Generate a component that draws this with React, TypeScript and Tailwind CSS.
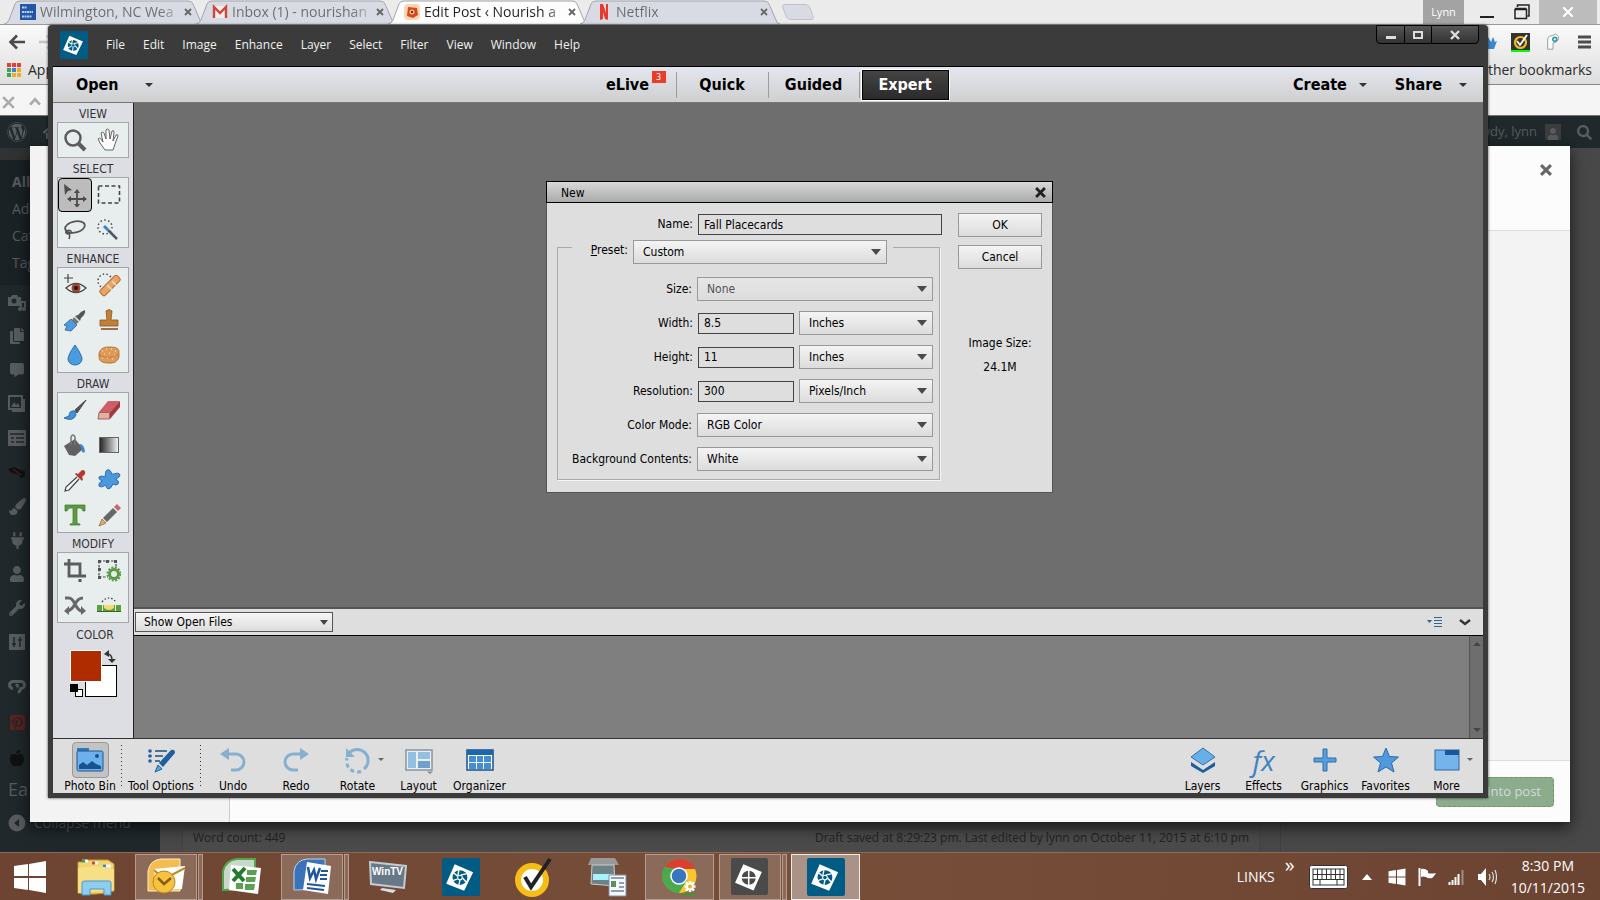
import React from 'react';
import { FaWordpress, FaHome, FaCopy, FaCommentAlt, FaPlug, FaUser, FaWrench, FaPinterestSquare, FaPaintBrush, FaSearch, FaAppleAlt } from 'react-icons/fa';

type IconProps = { children: React.ReactNode; size?: number; box?: number };

const Icon = ({ children, size = 24, box = 24 }: IconProps) => (
    <svg width={size} height={size} viewBox={`0 0 ${box} ${box}`} fill="none" aria-hidden="true" className="block shrink-0">
        {children}
    </svg>
);

const Caret = ({ color = '#333' }: { color?: string }) => (
    <svg width="8" height="4" viewBox="0 0 8 4" aria-hidden="true" className="shrink-0">
        <path d="M0 0h8L4 4z" fill={color} />
    </svg>
);

const Aperture = ({ size = 28, bg = '#005b85' }: { size?: number; bg?: string }) => (
    <Icon size={size} box={36}>
        <rect width="36" height="36" rx="2" fill={bg} />
        <path d="M12 6l17.500 7.500L21 31 4 24.500z" fill="#fff" />
        <circle cx="17" cy="18.500" r="7" fill={bg} />
        <circle cx="17" cy="18.500" r="2.200" stroke="#fff" strokeWidth="1" />
        <path d="M15 16.500l1-5M18 16l5-1M19.500 19l3.500 4M17 21l-1 4.500M14.500 20l-4.500 1.500M14.500 17l-3.500-3" stroke="#fff" strokeWidth="1.300" />
    </Icon>
);

/* ---------- browser behind ---------- */

type Tab = { title: string; active?: boolean; icon: React.ReactNode };

const TABS: Tab[] = [
    {
        title: 'Wilmington, NC Wea',
        icon: (
            <Icon size={16} box={16}>
                <rect width="16" height="16" fill="#2456a6" />
                <path d="M2 3.500h5M2 8h11M2 12.500h10" stroke="#b9cdec" strokeWidth="1.800" strokeDasharray="2 .5" />
            </Icon>
        ),
    },
    {
        title: 'Inbox (1) - nourishan',
        icon: (
            <Icon size={16} box={16}>
                <rect x="1" y="2" width="14" height="12" fill="#eee" />
                <path d="M2 14V3l6 6 6-6v11" stroke="#d0463b" strokeWidth="2.400" />
            </Icon>
        ),
    },
    {
        title: 'Edit Post ‹ Nourish a',
        active: true,
        icon: (
            <Icon size={16} box={16}>
                <rect width="16" height="16" rx="4" fill="#f6d9b4" />
                <path d="M4 3l9 1 1 7-5 3-6-2z" fill="#d9481c" />
                <circle cx="8" cy="8" r="2.500" fill="#f3c49c" />
                <circle cx="8" cy="8" r="1.200" fill="#8d1f12" />
            </Icon>
        ),
    },
    {
        title: 'Netflix',
        icon: (
            <Icon size={16} box={16}>
                <path d="M4 0h3l3 9V0h2v16l-3-1-2-7v7l-3 1z" fill="#e8392c" />
            </Icon>
        ),
    },
];

const BrowserTab = ({ tab }: { tab: Tab }) => (
    <button type="button" className="relative -mr-2 flex h-6 w-[200px] items-center gap-1 pl-4 pr-3">
        <svg className="absolute inset-0 h-full w-full" viewBox="0 0 200 24" preserveAspectRatio="none" aria-hidden="true">
            <path
                d="M0 24 Q3 24 5 20 L11 4 Q12 1 16 1 L184 1 Q188 1 189 4 L196 20 Q197 24 200 24"
                fill={tab.active ? '#fdfdfd' : '#d8dbe3'}
                stroke="#a3a5ab"
            />
        </svg>
        <span className="relative">{tab.icon}</span>
        <span
            className={
                tab.active
                    ? 'relative flex-1 whitespace-nowrap bg-linear-to-r from-[#222] from-85% to-[#ccc] bg-clip-text text-left text-sm text-transparent'
                    : 'relative flex-1 whitespace-nowrap bg-linear-to-r from-[#6b6b6b] from-85% to-[#c4c7ce] bg-clip-text text-left text-sm text-transparent'
            }
        >
            {tab.title}
        </span>
        <svg width="8" height="8" viewBox="0 0 8 8" className="relative shrink-0" aria-hidden="true">
            <path d="M1 1l6 6M7 1L1 7" stroke="#666" strokeWidth="1.800" />
        </svg>
    </button>
);

const SIDEBAR_ICONS = [
    { height: 'h-[34px]', icon: <Icon size={20} box={20}><path d="M1 5h3l1-2h5l1 2h3v9H1z" fill="currentColor" /><circle cx="7" cy="9" r="2.500" fill="#20282b" /><path d="M13 9h6v8a2 2 0 11-2-2v-4h-2v6a2 2 0 11-2-2z" fill="currentColor" /></Icon> },
    { height: 'h-[34px]', icon: <FaCopy size={16} /> },
    { height: 'h-[34px]', icon: <FaCommentAlt size={14} /> },
    { height: 'h-[34px]', icon: <Icon size={18} box={18}><path d="M1 1h13v13H1zM16 4v12H4" stroke="currentColor" strokeWidth="2" /><path d="M3 12l3-5 2 3 2-2 2 4z" fill="currentColor" /></Icon> },
    { height: 'h-[34px]', icon: <Icon size={18} box={18}><path d="M0 1h18v16H0z" fill="currentColor" /><path d="M2 5h14M3 9h3M8 9h8M3 13h3M8 13h8" stroke="#20282b" strokeWidth="1.500" /></Icon> },
    { height: 'h-[34px]', icon: <Icon size={20} box={20}><path d="M1 7l6-2 7 3 4 1v6l-4 1-3-4-6-1z" fill="#111" /><path d="M6 7l8 6" stroke="#5c2620" /></Icon> },
    { height: 'h-[34px]', icon: <FaPaintBrush size={17} /> },
    { height: 'h-[34px]', icon: <FaPlug size={17} /> },
    { height: 'h-[34px]', icon: <FaUser size={16} /> },
    { height: 'h-[34px]', icon: <FaWrench size={16} /> },
    { height: 'h-[34px]', icon: <Icon size={16} box={16}><rect width="16" height="16" fill="currentColor" /><path d="M5 3v10M11 3v10M3 10h4M9 6h4" stroke="#20282b" strokeWidth="1.500" /></Icon> },
    { height: 'h-[54px]', icon: <Icon size={20} box={20}><path d="M6 12.500a3.500 3.500 0 010-7c4 0 3 0 4 0s0 0 4 0a3.500 3.500 0 010 7q-1 3-3 4" stroke="currentColor" strokeWidth="3" /><path d="M8 9q2-3 4 0l-1 4z" fill="currentColor" /></Icon> },
    { height: 'h-[18px]', icon: <span className="text-[#5e211d]"><FaPinterestSquare size={17} /></span> },
    { height: 'h-[54px]', icon: <span className="text-[#111]"><FaAppleAlt size={16} /></span> },
];

const Browser = () => (
    <div className="flex min-h-0 flex-1 flex-col font-['Open_Sans',sans-serif]">
        <div className="flex h-[25px] shrink-0 border-b border-[#999] bg-[#ebebeb]">
            <div className="flex pl-1">
                {TABS.map((tab) => (
                    <BrowserTab key={tab.title} tab={tab} />
                ))}
                <button type="button" aria-label="New tab" className="ml-3 mt-1 h-4 w-[28px] skew-x-[20deg] rounded border border-[#bfc1c6] bg-[#d8dbe3]" />
            </div>
            <div className="ml-auto flex items-center pr-[3px]">
                <span className="flex h-6 w-[41px] items-center justify-center bg-[#a3a3a3] text-[11px] text-white">Lynn</span>
                <button type="button" aria-label="Minimize" className="flex h-6 w-[45px] items-end justify-center pb-1.5">
                    <span className="h-0.5 w-3.5 bg-[#222]" />
                </button>
                <button type="button" aria-label="Restore" className="mr-1 flex h-6 w-[26px] items-center justify-center">
                    <Icon size={16} box={16}>
                        <path d="M1 5.500h11.500v9H1zM1 4.500h11.500M3.500 3V1H15v11h-1.500" stroke="#222" strokeWidth="1.500" />
                    </Icon>
                </button>
                <button type="button" aria-label="Close" className="flex h-6 w-[58px] items-center justify-center bg-[#bcbcbc]">
                    <Icon size={10} box={10}>
                        <path d="M0 0l10 10M10 0L0 10" stroke="#fff" strokeWidth="2" />
                    </Icon>
                </button>
            </div>
        </div>
        <div className="flex h-[60px] shrink-0 flex-col border-b border-[#888] bg-linear-to-b from-[#fafafa] to-[#dedede]">
            <div className="flex h-[34px] items-center pl-2 pr-2">
                <Icon size={18} box={18}>
                    <path d="M17 9H3M9 2.500L2.500 9 9 15.500" stroke="#4a4a4a" strokeWidth="2.600" />
                </Icon>
                <span className="ml-3">
                    <Icon size={18} box={18}>
                        <path d="M1 9h14M9 2.500L15.500 9 9 15.500" stroke="#c4c4c4" strokeWidth="2.600" />
                    </Icon>
                </span>
                <div className="ml-auto flex items-center gap-3.5">
                    <Icon size={18} box={18}>
                        <path d="M9 4l3 5 2-5 2 5 2-1-3 8H8z" fill="#3f86cf" />
                    </Icon>
                    <Icon size={19} box={19}>
                        <rect width="19" height="19" fill="#333" />
                        <circle cx="9.500" cy="9.500" r="5.500" stroke="#f5b921" strokeWidth="2.200" />
                        <path d="M6 8l3 4 7-10" stroke="#fff" strokeWidth="1.800" />
                        <path d="M0 18h19" stroke="#0f0" strokeWidth="2" />
                    </Icon>
                    <Icon size={18} box={20}>
                        <path d="M4 18V8q0-5 5-5l4-2 3 3q1 6-6 7v7z" fill="#f8f8f8" stroke="#999" />
                        <circle cx="12" cy="7" r="3" fill="#2b9aa5" />
                        <circle cx="12" cy="7" r="1.200" fill="#fff" />
                    </Icon>
                    <Icon size={16} box={16}>
                        <path d="M2 3h13M2 8h13M2 13h13" stroke="#4d4d4d" strokeWidth="3" />
                    </Icon>
                </div>
            </div>
            <div className="flex h-[22px] items-center justify-between pl-[7px] pr-2 text-sm text-[#2b2b2b]">
                <span className="flex items-center gap-[7px]">
                    <Icon size={14} box={14}>
                        <path d="M0 2h4M5 2h4M10 2h4" stroke="#e53f34" strokeWidth="4" />
                        <path d="M0 7h4M0 12h4" stroke="#3fa354" strokeWidth="4" />
                        <path d="M5 7h4" stroke="#3b7de0" strokeWidth="4" />
                        <path d="M10 7h4M5 12h4M10 12h4" stroke="#f0ac1c" strokeWidth="4" />
                    </Icon>
                    Apps
                </span>
                <span>Other bookmarks</span>
            </div>
        </div>
        <div className="flex h-[31px] shrink-0 items-center gap-3.5 border-b border-[#777] bg-[#f5f5f5] pl-0.5 pt-1">
            <Icon size={13} box={11}>
                <path d="M1 1l9 9M10 1l-9 9" stroke="#ababab" strokeWidth="2.200" />
            </Icon>
            <Icon size={12} box={11}>
                <path d="M1 8l4.500-5L10 8" stroke="#ababab" strokeWidth="2.400" />
            </Icon>
        </div>
        <WordPress />
    </div>
);

const WordPress = () => (
    <div className="relative flex min-h-0 flex-1 flex-col overflow-hidden bg-[#484848] text-[#585c5e]">
        <div className="flex h-8 shrink-0 items-center justify-between bg-[#20282b] pl-[7px] pr-2">
            <span className="flex items-center gap-4">
                <FaWordpress size={20} />
                <FaHome size={18} />
            </span>
            <span className="flex items-center gap-2 text-[13px]">
                Howdy, lynn
                <span className="flex size-4 items-end justify-center bg-[#3c3c3c]">
                    <FaUser size={12} />
                </span>
                <span className="ml-2">
                    <FaSearch size={15} />
                </span>
            </span>
        </div>
        <div className="flex min-h-0 flex-1">
            <nav className="w-40 shrink-0 bg-[#20282b]">
                <div className="h-3 bg-[#303233]" />
                <div className="flex h-[125px] flex-col bg-[#1b2225] pl-3 pt-2 text-sm leading-[27px]">
                    <a href="#all" className="font-bold">All</a>
                    <a href="#add">Add</a>
                    <a href="#categories">Cat</a>
                    <a href="#tags">Tag</a>
                </div>
                {SIDEBAR_ICONS.map((item, index) => (
                    <div key={index} className={`${item.height} flex w-[34px] items-center justify-center`}>
                        {item.icon}
                    </div>
                ))}
                <div className="-mt-2 h-6 pl-2 text-lg leading-6">Ea</div>
                <div className="mt-3 flex items-center gap-2 pl-2 text-sm">
                    <Icon size={18} box={18}>
                        <circle cx="9" cy="9" r="8.500" fill="currentColor" />
                        <path d="M11 5L6 9l5 4z" fill="#20282b" />
                    </Icon>
                    Collapse menu
                </div>
            </nav>
            <div className="flex flex-1 items-end pl-[22px]">
                <div className="flex h-[22px] flex-1 items-start justify-between border-x border-[#424242] bg-[#4b4b4b] px-2.5 text-xs text-[#222]">
                    <span>Word count: 449</span>
                    <span>Draft saved at 8:29:23 pm. Last edited by lynn on October 11, 2015 at 6:10 pm</span>
                </div>
                <div className="ml-5 h-[30px] w-[320px] border-l border-[#404040]" />
            </div>
        </div>
        <section className="absolute bottom-[30px] left-[30px] right-[30px] top-[30px] flex bg-[#fcfcfc] shadow-[0_5px_15px_rgba(0,0,0,0.7)]">
            <div className="w-[200px] border-r border-[#ccc] bg-[#f3f3f3]" />
            <div className="flex flex-1 flex-col">
                <div className="flex h-[84px] justify-end pr-[18px] pt-[18px]">
                    <button type="button" aria-label="Close media panel" className="size-3">
                        <Icon size={12} box={11}>
                            <path d="M1 1l9 9M10 1l-9 9" stroke="#666" strokeWidth="2.800" />
                        </Icon>
                    </button>
                </div>
                <div className="flex-1 border-y border-[#ddd] bg-[#f3f3f3]" />
                <div className="flex h-[61px] items-center justify-end pr-4">
                    <button type="button" className="h-[30px] w-[118px] rounded border border-dashed border-[#6a9a55] bg-[#8bac8d] pr-3 text-right text-[13px] text-[#d5dbd6]">
                        into post
                    </button>
                </div>
            </div>
        </section>
    </div>
);

/* ---------- tool panel ---------- */

const TOOL_GROUPS: { title: string; tools: { name: string; active?: boolean; icon: React.ReactNode }[] }[] = [
    {
        title: 'VIEW',
        tools: [
            { name: 'Zoom', icon: <Icon><circle cx="10" cy="10" r="7.500" stroke="#5c5c5c" strokeWidth="2.500" /><path d="M15.500 15.500l6.500 6.500" stroke="#5c5c5c" strokeWidth="4" /></Icon> },
            { name: 'Hand', icon: <Icon><path d="M8 22L3 15 1 11q1-2 3 0l2 3L4 5q1-2 3 0l2 6V2q1-2 3 0l1 9 2-8q2-1 2 1l-1 9 3-6q2-1 2 1l-3 8-2 6z" fill="#fcfcfc" stroke="#555" strokeWidth=".9" /></Icon> },
        ],
    },
    {
        title: 'SELECT',
        tools: [
            { name: 'Move', active: true, icon: <Icon><path d="M1 1l8 6-4 1-3 4z" fill="#4c4c4c" /><path d="M14 9v14M7 16h14" stroke="#4c4c4c" strokeWidth="1.800" /><path d="M14 6l3 4h-6zM14 25l3-4h-6zM4 16l4-3v6zM24 16l-4-3v6z" fill="#4c4c4c" /></Icon> },
            { name: 'Marquee', icon: <Icon><rect x="1.500" y="3" width="21" height="17" stroke="#444" strokeWidth="1.600" strokeDasharray="4 2.500" /></Icon> },
            { name: 'Lasso', icon: <Icon><ellipse cx="12" cy="9" rx="10" ry="5.500" transform="rotate(-12 12 9)" stroke="#555" strokeWidth="1.800" /><path d="M4 12q-3 3 1 4 4 0 3-3-3-2-4 1 4 2 2 7" stroke="#555" strokeWidth="1.500" /></Icon> },
            { name: 'Quick selection', icon: <Icon><circle cx="8" cy="9" r="7" stroke="#444" strokeWidth="1.500" strokeDasharray="1.500 2.500" /><path d="M7 8l4 4" stroke="#3484d0" strokeWidth="3" /><path d="M11 12l9 9" stroke="#4d5964" strokeWidth="2.500" /></Icon> },
        ],
    },
    {
        title: 'ENHANCE',
        tools: [
            { name: 'Red eye', icon: <Icon><path d="M5 1v9M1 5h9" stroke="#444" strokeWidth="1.200" /><path d="M3 15q10-9 20 0-10 9-20 0z" fill="#f3f3f3" stroke="#444" strokeWidth="1.300" /><circle cx="13" cy="15" r="4.500" fill="#9c4331" /><circle cx="13" cy="15" r="2" fill="#2c1512" /></Icon> },
            { name: 'Healing', icon: <Icon><circle cx="8" cy="8" r="7" stroke="#444" strokeWidth="1.400" strokeDasharray="1.500 2.300" /><rect x="1" y="9" width="24" height="7" rx="2" transform="rotate(-45 13 12.500)" fill="#e9a565" stroke="#b26f35" /><path d="M10 12l5 5M15 8l4 4" stroke="#f8dfbc" strokeWidth="1.500" /></Icon> },
            { name: 'Smart brush', icon: <Icon><path d="M22 2q-4 1-7 5l-3 1 5 5 1-3q5-4 4-8z" fill="#555" /><path d="M11 9l5 5-3 2-4-4z" fill="#777" /><path d="M8 11l6 6-6 6-6-1 2-4-3-1z" fill="#4f9add" stroke="#2866a2" strokeWidth=".8" /></Icon> },
            { name: 'Clone stamp', icon: <Icon><path d="M9 3q3-3 6 0l-1 9h7v6H3v-6h7z" fill="#c08038" stroke="#8d5520" strokeWidth=".8" /><path d="M4 21h17" stroke="#804416" strokeWidth="1.500" /></Icon> },
            { name: 'Blur', icon: <Icon><path d="M12 2q7 10 7 14a7 6 0 01-14 0q0-4 7-14z" fill="#4b9bdf" stroke="#2d6da9" /></Icon> },
            { name: 'Sponge', icon: <Icon><path d="M2 10q2-7 12-6 9 0 8 6v4q-2 7-11 6-9 0-9-6z" fill="#df9a57" stroke="#a8682e" strokeWidth=".8" /><path d="M5 8h1M9 6h1M14 6h1M18 8h1M7 11h1M12 10h1M17 12h1M5 15h1M10 15h1M15 16h1" stroke="#f7d6a8" strokeWidth="1.500" /><path d="M2 12q10 5 20-1" stroke="#a8682e" strokeWidth=".8" strokeDasharray="2 1" /></Icon> },
        ],
    },
    {
        title: 'DRAW',
        tools: [
            { name: 'Brush', icon: <Icon><path d="M23 2L12 12l2 3z" fill="#555" stroke="#444" /><path d="M12 13q-6-1-6 5l-5 2q9 4 12-3z" fill="#4391d8" stroke="#245f9b" strokeWidth=".8" /></Icon> },
            { name: 'Eraser', icon: <Icon><path d="M11 3h12L13 14H2z" fill="#cf5d68" /><path d="M23 3v6L13 21v-7z" fill="#a8363f" /><path d="M2 14.500h10.500V21H1z" fill="#e2b0a5" stroke="#8e4a45" strokeWidth=".8" /></Icon> },
            { name: 'Paint bucket', icon: <Icon><path d="M1 13l11-7 8 10-8 7-6-1z" fill="#616161" /><path d="M8 12V4q2-4 4 0v8" stroke="#777" strokeWidth="1.500" /><path d="M16 11q5-1 6 8-4 2-3-3z" fill="#3a8ad3" /></Icon> },
            { name: 'Gradient', icon: <Icon><defs><linearGradient id="grad"><stop stopColor="#222" /><stop offset="1" stopColor="#f5f5f5" /></linearGradient></defs><rect x="2.500" y="4.500" width="19" height="15" fill="url(#grad)" stroke="#666" /></Icon> },
            { name: 'Eyedropper', icon: <Icon><path d="M14 9L3 19l-1 4 4-1L16 11" fill="#f8f8f8" stroke="#444" strokeWidth="1.200" /><path d="M12 6l7 7 1-2-1-2 3-3q1-4-3-4l-4 4-2-1z" fill="#b8372e" /></Icon> },
            { name: 'Shape', icon: <Icon><path d="M9 3q3-3 5 1 0 3 3 2 5-2 6 1 0 2-4 4 4 3 2 5-2 2-5 0-2 5-5 5-2-1-2-4-5 3-7 1-1-3 3-5-4-2-3-4 2-2 6 0z" fill="#4b98dd" stroke="#2c6dac" /></Icon> },
            { name: 'Type', icon: <Icon><path d="M2 2h20v6h-2q-1-3-3-3h-3v14q0 2 3 2v1H7v-1q3 0 3-2V5H7Q5 5 4 8H2z" fill="#5e9c44" stroke="#3d722a" strokeWidth=".7" /></Icon> },
            { name: 'Pencil', icon: <Icon><path d="M6 15L16 5l4 4L10 19z" fill="#676767" /><path d="M17 4l3-3 4 4-3 3z" fill="#ce6273" /><path d="M5 16l4 4-7 3z" fill="#e5ab68" stroke="#8d5a26" strokeWidth=".7" /></Icon> },
        ],
    },
    {
        title: 'MODIFY',
        tools: [
            { name: 'Crop', icon: <Icon><path d="M6 1v17h17M1 6h16v13" stroke="#5c5c5c" strokeWidth="2.800" /><path d="M15.500 21h3v3h-3z" fill="#555" /></Icon> },
            { name: 'Recompose', icon: <Icon><path d="M2 3h17v7M2 3v16h9" stroke="#444" strokeWidth="1.200" strokeDasharray="2.500 1.500" /><path d="M1 2h3v3H1zM9 2h3v3H9zM17 2h3v3h-3zM1 10h3v3H1zM1 18h3v3H1z" fill="#555" /><circle cx="17" cy="16" r="4.500" stroke="#5d9a45" strokeWidth="3" /><circle cx="17" cy="16" r="6.500" stroke="#5d9a45" strokeWidth="2" strokeDasharray="2 1.400" /></Icon> },
            { name: 'Content-aware move', icon: <Icon><path d="M2 5h4q3 0 6 6t6 7h2M20 5q-5 0-8 6t-8 7" stroke="#686868" strokeWidth="3" /><path d="M18 13l5 5-5 4zM6 13l-5 5 5 4z" fill="#686868" /></Icon> },
            { name: 'Straighten', icon: <Icon><path d="M5 9q7-8 14 0" stroke="#333" strokeWidth="1.200" strokeDasharray="1.500 2" /><path d="M0 12h24v7H0z" fill="#5ba13c" /><path d="M7 12h10v3q-5 4-10 0z" fill="#f4dc72" /><path d="M5.500 12v7M18.500 12v7" stroke="#edf2ed" /><path d="M0 18.500h24" stroke="#34651f" /></Icon> },
        ],
    },
];

const ToolPanel = () => (
    <aside className="flex w-20 shrink-0 flex-col items-center bg-[#dcdee3] text-[#333]">
        {TOOL_GROUPS.map((group) => (
            <div key={group.title} className="w-[72px]">
                <h2 className="h-[19px] text-center text-xs leading-[22px]">{group.title}</h2>
                <div className="grid grid-cols-2 gap-px border border-[#a5a5a5] bg-[#e8eeee] pr-0.5">
                    {group.tools.map((tool) => (
                        <button
                            key={tool.name}
                            type="button"
                            title={tool.name}
                            className={
                                tool.active
                                    ? 'flex h-[34px] items-center justify-center rounded border border-black bg-[#bcbcbc]'
                                    : 'flex h-[34px] items-center justify-center'
                            }
                        >
                            {tool.icon}
                        </button>
                    ))}
                </div>
            </div>
        ))}
        <h2 className="pl-1 pt-0.5 text-xs leading-5">COLOR</h2>
        <svg width="48" height="50" viewBox="0 0 48 50" className="mt-1" aria-hidden="true">
            <rect x="16.500" y="16.500" width="31" height="31" fill="#fff" stroke="#000" />
            <rect x="1" y="1" width="32" height="32" fill="#fff" />
            <rect x="2" y="2" width="30" height="30" fill="#ae2c00" />
            <path d="M38 5q5 0 5 6" stroke="#333" strokeWidth="1.500" fill="none" />
            <path d="M35 5l5-4v7zM43 14l-4-4h8z" fill="#333" />
            <rect x="6.500" y="40.500" width="7" height="7" fill="#fff" stroke="#000" />
            <rect x="1" y="35" width="8" height="8" />
        </svg>
    </aside>
);

/* ---------- "New" dialog ---------- */

type SelectBoxProps = { id: string; value: string; width: string; label?: string; disabled?: boolean };

const SelectBox = ({ id, value, width, label, disabled }: SelectBoxProps) => (
    <span className={`${width} relative block h-6`}>
        <select
            id={id}
            aria-label={label}
            disabled={disabled}
            className="h-6 w-full appearance-none border border-[#999] bg-linear-to-b from-[#f4f4f4] to-[#dcdcdc] pl-[9px] text-black disabled:from-[#e6e6e6] disabled:text-[#555] disabled:opacity-100"
        >
            <option>{value}</option>
        </select>
        <span className="pointer-events-none absolute right-1.5 top-[9px]">
            <svg width="10" height="6" viewBox="0 0 10 6" className="block" aria-hidden="true">
                <path d="M0 0h10L5 6z" fill="#4a4a4a" />
            </svg>
        </span>
    </span>
);

const MEASURES = [
    { id: 'width', label: 'Width:', value: '8.5', unit: 'Inches' },
    { id: 'height', label: 'Height:', value: '11', unit: 'Inches' },
    { id: 'resolution', label: 'Resolution:', value: '300', unit: 'Pixels/Inch' },
];

const FIELD = 'h-[21px] border border-[#444] bg-[#dedede] px-[5px]';

const NewDialog = () => (
    <form className="w-[507px] border border-[#555] bg-[#dedede] text-xs text-black" onSubmit={(event) => event.preventDefault()}>
        <div className="-mx-px -mt-px flex h-[22px] items-center justify-between border border-black bg-linear-to-b from-[#d8d8d8] to-[#a9abaa] pl-3.5 pr-1.5">
            <h1 className="pt-0.5">New</h1>
            <button type="button" aria-label="Close dialog">
                <Icon size={11} box={10}>
                    <path d="M1 1l8 8M9 1L1 9" stroke="#222" strokeWidth="2.600" />
                </Icon>
            </button>
        </div>
        <div className="flex justify-between pb-3 pl-2.5 pr-2.5 pt-2.5">
            <div className="w-[385px] pt-px">
                <div className="flex items-start justify-end gap-[5px]">
                    <label htmlFor="name" className="leading-[21px]">Name:</label>
                    <input id="name" defaultValue="Fall Placecards" className={`${FIELD} w-[244px]`} />
                </div>
                <fieldset className="mt-[5px] w-[383px] border border-[#aaa] pb-2 shadow-[1px_1px_0_#f5f5f5]">
                    <legend className="ml-3.5 flex h-3.5 w-[321px] justify-end gap-[5px] pr-1.5">
                        <label htmlFor="preset" className="leading-5"><u>P</u>reset:</label>
                        <SelectBox id="preset" value="Custom" width="w-[254px]" />
                    </legend>
                    <div className="flex flex-col items-end gap-2.5 pr-1.5 pt-[23px]">
                        <div className="flex items-center gap-[5px]">
                            <label htmlFor="size">Size:</label>
                            <SelectBox id="size" value="None" width="w-[236px]" disabled />
                        </div>
                        {MEASURES.map((row) => (
                            <div key={row.id} className="flex items-center gap-[5px]">
                                <label htmlFor={row.id}>{row.label}</label>
                                <input id={row.id} defaultValue={row.value} className={`${FIELD} w-24`} />
                                <SelectBox id={`${row.id}-unit`} label={`${row.label} unit`} value={row.unit} width="w-[134px]" />
                            </div>
                        ))}
                        <div className="flex items-center gap-[5px]">
                            <label htmlFor="mode">Color Mode:</label>
                            <SelectBox id="mode" value="RGB Color" width="w-[236px]" />
                        </div>
                        <div className="flex items-center gap-[5px]">
                            <label htmlFor="background">Background Contents:</label>
                            <SelectBox id="background" value="White" width="w-[236px]" />
                        </div>
                    </div>
                </fieldset>
            </div>
            <div className="flex w-[84px] flex-col gap-2">
                <button type="submit" className="h-6 border border-[#999] bg-linear-to-b from-[#f4f4f4] to-[#dcdcdc]">OK</button>
                <button type="button" className="h-6 border border-[#999] bg-linear-to-b from-[#f4f4f4] to-[#dcdcdc]">Cancel</button>
                <p className="mt-[54px] text-center leading-6">
                    Image Size:
                    <br />
                    24.1M
                </p>
            </div>
        </div>
    </form>
);

/* ---------- bottom bar ---------- */

type TaskProps = { label: string; width: string; selected?: boolean; caret?: boolean; children: React.ReactNode };

const TaskButton = ({ label, width, selected, caret, children }: TaskProps) => (
    <button type="button" className={`${width} flex flex-col items-center whitespace-nowrap pt-[3px] text-xs text-black`}>
        <span
            className={
                selected
                    ? 'relative flex h-9 w-[37px] items-center justify-center rounded border border-[#999] bg-[#c3c3c3]'
                    : 'relative flex h-9 w-[37px] items-center justify-center'
            }
        >
            {children}
            {caret && (
                <span className="absolute -right-2 top-4">
                    <svg width="6" height="3" viewBox="0 0 6 3" className="block" aria-hidden="true">
                        <path d="M0 0h6L3 3z" fill="#666" />
                    </svg>
                </span>
            )}
        </span>
        <span className="leading-4">{label}</span>
    </button>
);

const Divider = () => (
    <div className="mt-1.5 h-11 w-px bg-[repeating-linear-gradient(#333_0_1px,transparent_1px_4px)]" />
);

const BottomBar = () => (
    <footer className="flex h-[55px] shrink-0 items-start border-t border-[#333] bg-[#dedede] pl-1.5 pr-1.5">
        <TaskButton label="Photo Bin" width="w-[62px]" selected>
            <Icon size={28} box={28}>
                <path d="M1 5V2h12v3" fill="#2e79bb" />
                <rect x="1" y="5" width="26" height="20" rx="1.500" fill="#6db1ec" stroke="#1d578e" />
                <path d="M3 23v-4l4-3 4 3 5-4 4 3 5 2v3z" fill="#17548f" />
                <circle cx="21" cy="10" r="2" fill="#17548f" />
            </Icon>
        </TaskButton>
        <Divider />
        <TaskButton label="Tool Options" width="w-[78px]">
            <Icon size={28} box={28}>
                <path d="M8 5h12M8 10h8M8 15h5" stroke="#1d4f7f" strokeWidth="1.600" />
                <circle cx="3" cy="5" r="1.800" fill="#1e5fa0" /><circle cx="3" cy="10" r="1.800" fill="#1e5fa0" /><circle cx="3" cy="15" r="1.800" fill="#1e5fa0" />
                <path d="M12 17L24 4q4-1 4 3L16 21z" fill="#1f5f9e" />
                <path d="M11 19l4 4-7 3z" fill="#5fa5e0" stroke="#1f5f9e" />
            </Icon>
        </TaskButton>
        <Divider />
        <TaskButton label="Undo" width="w-16">
            <Icon size={28} box={28}>
                <path d="M4 8h13a8 8 0 010 16h-5" stroke="#86b0d0" strokeWidth="3" />
                <path d="M1 8l9-6v12z" fill="#86b0d0" />
            </Icon>
        </TaskButton>
        <TaskButton label="Redo" width="w-[62px]">
            <Icon size={28} box={28}>
                <path d="M22 8H11a8 8 0 000 16h5" stroke="#86b0d0" strokeWidth="3" />
                <path d="M27 8l-9-6v12z" fill="#86b0d0" />
            </Icon>
        </TaskButton>
        <TaskButton label="Rotate" width="w-[61px]" caret>
            <Icon size={28} box={28}>
                <path d="M5 7a11 11 0 1115 16" stroke="#86b0d0" strokeWidth="3" />
                <path d="M17 25.500A11 11 0 013 12" stroke="#86b0d0" strokeWidth="3" strokeDasharray="4 3" />
                <path d="M2 2v9h9z" fill="#86b0d0" />
            </Icon>
        </TaskButton>
        <TaskButton label="Layout" width="w-[61px]">
            <Icon size={28} box={28}>
                <rect x="1" y="4" width="26" height="20" fill="#eee" stroke="#8594a3" strokeWidth="1.500" />
                <path d="M3 6h8v16H3z" fill="#91c0e2" />
                <path d="M13 6h12v7H13z" fill="#91c0e2" />
                <path d="M13 15h12v7H13z" fill="#6f9fce" />
                <path d="M22 25.500h6L25 28z" fill="#888" />
            </Icon>
        </TaskButton>
        <TaskButton label="Organizer" width="w-[61px]">
            <Icon size={28} box={28}>
                <rect x="1" y="4" width="26" height="20" fill="#fff" stroke="#174f8a" strokeWidth="1.500" />
                <path d="M1 4h26v5H1z" fill="#1b66ad" />
                <path d="M3 10h7v6H3zM11 10h6v6h-6zM18 10h7v6h-7zM3 17h7v6H3zM11 17h6v6h-6zM18 17h7v6h-7z" fill="#438dd3" />
            </Icon>
        </TaskButton>
        <div className="ml-auto flex">
            <TaskButton label="Layers" width="w-[61px]">
                <Icon size={28} box={28}>
                    <path d="M2 16l12 8 12-8v4l-12 7-12-7z" fill="#1c5c9f" />
                    <path d="M14 2l12 9-12 8-12-8z" fill="#68aee9" stroke="#3270a8" />
                </Icon>
            </TaskButton>
            <TaskButton label="Effects" width="w-[61px]">
                <span className="font-['Open_Sans',sans-serif] text-[28px] italic leading-7 text-[#3f82c2]">fx</span>
            </TaskButton>
            <TaskButton label="Graphics" width="w-[61px]">
                <Icon size={28} box={28}>
                    <path d="M12 3h4v9h9v4h-9v9h-4v-9H3v-4h9z" fill="#599fdf" stroke="#2f6ca5" />
                </Icon>
            </TaskButton>
            <TaskButton label="Favorites" width="w-[61px]">
                <Icon size={28} box={28}>
                    <path d="M14 2l3.500 8.500 9 .5-7 6 2.500 9-8-5-8 5 2.500-9-7-6 9-.5z" fill="#5199de" stroke="#2d6ca9" />
                </Icon>
            </TaskButton>
            <TaskButton label="More" width="w-[61px]" caret>
                <Icon size={28} box={28}>
                    <rect x="2" y="4" width="24" height="20" fill="#75b3eb" stroke="#2c669e" />
                    <path d="M12 4h14v5H12z" fill="#17589c" />
                </Icon>
            </TaskButton>
        </div>
    </footer>
);

/* ---------- photo editor window ---------- */

const MENUS = ['File', 'Edit', 'Image', 'Enhance', 'Layer', 'Select', 'Filter', 'View', 'Window', 'Help'];

const Editor = () => (
    <main className="absolute bottom-[102px] left-12 right-[112px] top-[25px] flex flex-col rounded-t-sm border-x-[5px] border-b-[5px] border-[#3b3b3b] bg-[#3b3b3b] font-['DejaVu_Sans_Condensed','DejaVu_Sans',sans-serif] shadow-[0_0_3px_rgba(0,0,0,0.7)]">
        <header className="flex h-[41px] shrink-0 items-start pl-[7px]">
            <span className="mt-1.5">
                <Aperture />
            </span>
            <nav className="ml-[18px] flex gap-[18px] pt-3 font-['Open_Sans',sans-serif] text-xs leading-4 text-[#f0f0f0]">
                {MENUS.map((menu) => (
                    <button key={menu} type="button">{menu}</button>
                ))}
            </nav>
            <div className="ml-auto mr-1 flex h-[19px] divide-x divide-black rounded-b border border-black bg-linear-to-b from-[#555] to-[#333]">
                <button type="button" aria-label="Minimize editor" className="flex w-7 items-end justify-center pb-1">
                    <span className="h-[3px] w-2.5 bg-[#ddd]" />
                </button>
                <button type="button" aria-label="Maximize editor" className="flex w-[27px] items-center justify-center">
                    <span className="h-2 w-2.5 border-2 border-[#ddd]" />
                </button>
                <button type="button" aria-label="Close editor" className="flex w-[46px] items-center justify-center">
                    <Icon size={10} box={10}>
                        <path d="M1 1l8 8M9 1L1 9" stroke="#ddd" strokeWidth="2.400" />
                    </Icon>
                </button>
            </div>
        </header>
        <div className="flex h-[37px] shrink-0 items-center border-y border-t-black border-b-[#777] bg-linear-to-b from-[#e4e7f0] to-[#cfcfcf] text-base font-bold text-black">
            <div className="flex flex-1 items-center">
                <button type="button" className="flex items-center gap-[26px] pl-[23px]">
                    Open <Caret />
                </button>
            </div>
            <div className="mr-2 flex h-full items-center">
                <button type="button" className="relative h-full w-[112px] pl-4 text-center">
                    eLive
                    <span className="absolute right-2.5 top-1 flex h-3 w-3.5 items-center justify-center bg-[#ea3c2a] text-[9px] font-normal leading-3 text-white">3</span>
                </button>
                <button type="button" className="h-[26px] w-[92px] border-l border-[#9a9ca1]">Quick</button>
                <button type="button" className="h-[26px] w-[92px] border-x border-[#9a9ca1]">Guided</button>
                <button type="button" className="ml-0.5 h-[30px] w-[87px] border border-black bg-linear-to-b from-[#444] to-[#2b2b2b] text-white outline outline-white">Expert</button>
            </div>
            <div className="flex flex-1 items-center justify-end gap-7 pr-4">
                <button type="button" className="flex items-center gap-3">
                    Create <Caret />
                </button>
                <button type="button" className="flex items-center gap-[17px]">
                    Share <Caret />
                </button>
            </div>
        </div>
        <div className="flex min-h-0 flex-1">
            <ToolPanel />
            <div className="flex min-w-0 flex-1 flex-col border-l border-[#222]">
                <div className="flex min-h-0 flex-1 items-start justify-center bg-[#6e6e6e] pr-[18px] pt-[78px]">
                    <NewDialog />
                </div>
                <div className="flex h-[29px] shrink-0 items-center justify-between border-b border-t-2 border-b-black border-t-[#555] bg-[#dedede] pl-px pr-3 text-xs">
                    <span className="relative block">
                        <select aria-label="Files shown" className="h-5 w-[198px] appearance-none border border-[#555] bg-linear-to-b from-[#f6f6f6] to-[#ddd] pl-2 text-black">
                            <option>Show Open Files</option>
                        </select>
                        <span className="pointer-events-none absolute right-[5px] top-2">
                            <svg width="8" height="5" viewBox="0 0 8 5" className="block" aria-hidden="true">
                                <path d="M0 0h8L4 5z" fill="#444" />
                            </svg>
                        </span>
                    </span>
                    <span className="flex items-center gap-4">
                        <button type="button" aria-label="Bin options">
                            <Icon size={16} box={16}>
                                <path d="M7 3.500h8M7 6.500h8M7 9.500h8M7 12.500h8" stroke="#38618d" />
                                <path d="M0 6h5L2.500 9z" fill="#1d64a8" />
                            </Icon>
                        </button>
                        <button type="button" aria-label="Collapse bin">
                            <Icon size={12} box={12}>
                                <path d="M1 4l5 4 5-4" stroke="#333" strokeWidth="2.400" />
                            </Icon>
                        </button>
                    </span>
                </div>
                <div className="flex h-[102px] shrink-0 justify-end bg-[#7f7f7f]">
                    <div className="flex w-3.5 flex-col items-center justify-between border-l border-[#555] bg-[#6e6e6e] py-1.5">
                        <svg width="8" height="4" viewBox="0 0 8 4" aria-hidden="true">
                            <path d="M0 4h8L4 0z" fill="#444" />
                        </svg>
                        <Caret color="#444" />
                    </div>
                </div>
            </div>
        </div>
        <BottomBar />
    </main>
);

/* ---------- taskbar ---------- */

const APPS: { name: string; frame?: 'open' | 'stack' | 'active'; icon: React.ReactNode }[] = [
    {
        name: 'File Explorer',
        icon: (
            <Icon size={40} box={40}>
                <path d="M2 5h8l2-2h20l6 4v27q-18 5-36 2z" fill="#f2d470" stroke="#c49a35" />
                <path d="M6 4h6M16 6h6M27 9h8" stroke="#f5f5f5" strokeWidth="3" />
                <path d="M6 4h3" stroke="#3e9a4b" strokeWidth="3" />
                <path d="M16 6h3" stroke="#d4483c" strokeWidth="3" />
                <path d="M27 9h3" stroke="#3d84cf" strokeWidth="3" />
                <path d="M2 11l20-2 16 3v21l-36 3z" fill="#f7df85" />
                <path d="M6 38V26q0-2 3-2h24q2 0 2 2v12h-7v-6H14v6z" fill="#8dcdf0" stroke="#4b97cb" />
            </Icon>
        ),
    },
    {
        name: 'Outlook',
        frame: 'stack',
        icon: (
            <Icon size={40} box={40}>
                <path d="M2 34V14Q4 3 15 2h19v32z" fill="#f5bd51" stroke="#fff0c0" />
                <path d="M8 12l31-3-3 23-26 1z" fill="#fff" />
                <path d="M8 13l10 9 21-11" stroke="#c68624" strokeWidth="2" />
                <circle cx="18" cy="25" r="11" fill="#f6c33e" stroke="#b98618" />
                <path d="M12 21l6 6 7-6" stroke="#8a5c13" strokeWidth="2.500" />
            </Icon>
        ),
    },
    {
        name: 'Excel',
        icon: (
            <Icon size={40} box={40}>
                <path d="M1 33V14Q4 3 15 2h18v30z" fill="#c9d8c9" stroke="#52a74c" strokeWidth="2" />
                <path d="M9 8l30 3-3 26-29-4z" fill="#fff" />
                <path d="M25 13h10l-1 5h-9zM24 20h10l-1 5h-9zM14 26h7v6h-7zM23 27h10l-1 6h-9z" fill="#5aa251" />
                <path d="M11 12l11 12M23 11L11 24" stroke="#247a2c" strokeWidth="4" />
            </Icon>
        ),
    },
    {
        name: 'Word',
        frame: 'stack',
        icon: (
            <Icon size={40} box={40}>
                <path d="M2 33V14Q4 3 15 2h18v30z" fill="#3c73b8" stroke="#b9d4f1" />
                <path d="M15 5l24 4-3 28-25-4z" fill="#fff" />
                <path d="M16 10l2 11 4-8 2 9 4-11" stroke="#2157a0" strokeWidth="2.500" />
                <path d="M29 14h7M28 18h7M28 22h7M15 27l18 2M15 31l17 2" stroke="#2157a0" strokeWidth="2" />
            </Icon>
        ),
    },
    {
        name: 'WinTV',
        icon: (
            <Icon size={40} box={40}>
                <path d="M2 5l36 4-2 22L3 27z" fill="#697887" stroke="#c4ccd3" strokeWidth="2" />
                <path d="M14 31l14 2-3 3-13-3z" fill="#d8dde1" />
                <text x="4" y="18" fontSize="10" fontWeight="bold" fill="#fff" fontFamily="Liberation Sans">WinTV</text>
            </Icon>
        ),
    },
    { name: 'Elements Organizer', icon: <Aperture size={38} /> },
    {
        name: 'Norton',
        icon: (
            <Icon size={40} box={40}>
                <circle cx="18" cy="23" r="14" fill="#fff" stroke="#f7bd17" strokeWidth="6" />
                <path d="M11 20l6 10L36 2" stroke="#222" strokeWidth="4" />
            </Icon>
        ),
    },
    {
        name: 'Scanner',
        icon: (
            <Icon size={40} box={40}>
                <path d="M4 1h24l4 7H1z" fill="#999" />
                <path d="M5 8h22l1 21-24-2z" fill="#6d8287" stroke="#ccc" />
                <path d="M6 17h22v6H6z" fill="#a9f1fb" />
                <path d="M22 18h17v21H22z" fill="#f5f7fa" stroke="#7c90a8" />
                <path d="M24 21h13M24 26h5M32 26h5M32 30h5M24 34h13" stroke="#6b83a3" strokeWidth="1.500" />
                <path d="M24 24h5v6h-5z" fill="#57945b" />
            </Icon>
        ),
    },
    {
        name: 'Chrome',
        frame: 'open',
        icon: (
            <Icon size={38} box={38}>
                <circle cx="18" cy="18" r="17" fill="#4ca94c" />
                <path d="M4 9a17 17 0 0130 2H18z" fill="#dd3e32" />
                <path d="M34 11a17 17 0 01-16 24l8-13-4-11z" fill="#f7c72d" />
                <circle cx="18" cy="18" r="8" fill="#3777bd" stroke="#fff" strokeWidth="1.500" />
                <path d="M29 23v11M23.500 28.500h11M25 24.500l8 8M33 24.500l-8 8" stroke="#fff" strokeWidth="2.500" />
                <circle cx="29" cy="28.500" r="2" fill="#e8b423" />
                <path d="M22 36l7 1 6-1" stroke="#3b9a2f" strokeWidth="2" />
            </Icon>
        ),
    },
    {
        name: 'Photo Organizer',
        frame: 'stack',
        icon: (
            <Icon size={37} box={36}>
                <rect width="36" height="36" rx="2" fill="#4a4a4a" />
                <path d="M12 6l18 7.500-8 18L4 24z" fill="#fff" />
                <path d="M16.500 12.500a7 7 0 00-6 6h6zM18 12.500a7 7 0 016 6h-6zM16.500 20v6a7 7 0 01-6-6zM18 20v6a7 7 0 006-6z" fill="#4a4a4a" />
            </Icon>
        ),
    },
    { name: 'Photo Editor', frame: 'active', icon: <Aperture size={38} /> },
];

const FRAMES = {
    none: 'flex h-[46px] w-[69px] items-center justify-center',
    open: 'flex h-[46px] w-[69px] items-center justify-center border border-[#b69c8f] bg-[#8b6a59]',
    stack: 'flex h-[46px] w-[62px] items-center justify-center border border-[#b69c8f] bg-[#8b6a59]',
    active: 'flex h-[46px] w-[69px] items-center justify-center border border-[#eee] bg-[#ab9287]',
};

const Taskbar = () => (
    <div className="flex h-12 shrink-0 items-center border-t border-[#8a6b5b] bg-linear-to-r from-[#6c4431] via-[#774f39] to-[#6b4331] font-['Open_Sans',sans-serif] text-white">
        <button type="button" aria-label="Start" className="flex w-[59px] justify-center">
            <Icon size={34} box={34}>
                <path d="M1 6l14-2v12H1zM16 4l17-3v15H16zM1 18h14v12L1 28zM16 18h17v15l-17-3z" fill="#fff" />
            </Icon>
        </button>
        {APPS.map((app) => (
            <button key={app.name} type="button" title={app.name} className="flex w-[73px] justify-center">
                <span className={FRAMES[app.frame ?? 'none']}>{app.icon}</span>
                {app.frame === 'stack' && <span className="ml-px h-[46px] w-[5px] border border-[#b69c8f] bg-[#8b6a59]" />}
            </button>
        ))}
        <div className="ml-auto flex items-center pr-[15px] text-sm">
            <span>LINKS</span>
            <span className="-mt-6 ml-2.5 text-xl leading-5">»</span>
            <span className="ml-3.5">
                <svg width="39" height="24" viewBox="0 0 39 24" fill="none" className="block" aria-hidden="true">
                    <rect x=".5" y=".5" width="38" height="23" rx="2" fill="#fff" stroke="#333" />
                    <rect x="4" y="4" width="31" height="16" stroke="#333" />
                    <path d="M4 9.500h31M4 14.500h31M8.500 4v10M13 4v10M17.500 4v10M22 4v10M26.500 4v10M31 4v10M11 15v5M28 15v5" stroke="#333" />
                </svg>
            </span>
            <svg width="10" height="6" viewBox="0 0 10 6" className="ml-3.5" aria-hidden="true">
                <path d="M0 6h10L5 0z" fill="#fff" />
            </svg>
            <span className="ml-4">
                <Icon size={18} box={34}>
                    <path d="M1 6l14-2v12H1zM17 4l16-3v15H17zM1 18h14v12L1 28zM17 18h16v15l-16-3z" fill="#fff" />
                </Icon>
            </span>
            <span className="ml-3">
                <Icon size={18} box={18}>
                    <path d="M1.500 0v18" stroke="#fff" strokeWidth="2" />
                    <path d="M3 1q4-1 7 2v2q3 1 8 0-2 4-4 5-4 1-6-1-3-1-5 0z" fill="#fff" />
                </Icon>
            </span>
            <span className="ml-3">
                <Icon size={17} box={17}>
                    <path d="M1.500 17v-3M4.500 17v-5M7.500 17v-8M10.500 17V6" stroke="#fff" strokeWidth="2" />
                    <path d="M14.500 17V2" stroke="#a58c80" strokeWidth="2" />
                </Icon>
            </span>
            <span className="ml-3">
                <Icon size={20} box={20}>
                    <path d="M1 7h3l5-6v18l-5-6H1z" fill="#fff" />
                    <path d="M12 7q2 3 0 6M15 5q3 5 0 10M18 3q3 7 0 14" stroke="#ddd" strokeWidth="1.200" />
                </Icon>
            </span>
            <span className="ml-3.5 text-center leading-[22px]">
                8:30 PM
                <br />
                10/11/2015
            </span>
        </div>
    </div>
);

export default function App() {
    return (
        <div className="relative flex h-screen flex-col overflow-hidden bg-[#484848]">
            <Browser />
            <Editor />
            <Taskbar />
        </div>
    );
}
